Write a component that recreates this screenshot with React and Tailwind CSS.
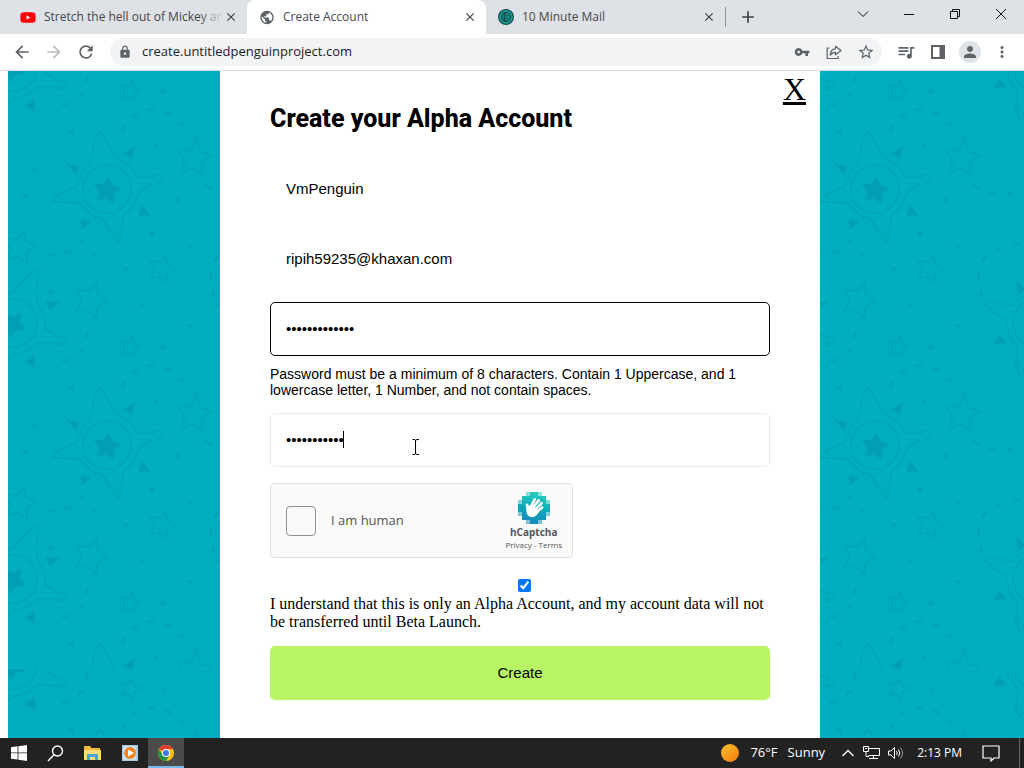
import React, { useState } from 'react';
import { FaYoutube } from 'react-icons/fa';
import {
  MdAdd,
  MdArrowBack,
  MdArrowForward,
  MdClose,
  MdLock,
  MdMoreVert,
  MdPerson,
  MdPublic,
  MdQueueMusic,
  MdRefresh,
  MdStarBorder,
  MdVpnKey,
} from 'react-icons/md';

const STAR = 'M0 -10 L3 -4 L10 -3 L5 2 L6 9 L0 6 L-6 9 L-5 2 L-10 -3 L-3 -4 Z';

// outlined stars in the 256px wallpaper tile: x, y, scale, rotation
const STARS = [
  [122, 20, 1.05, 15],
  [186, 87, 1.75, 8],
  [12, 176, 1.65, 12],
  [154, 198, 1.35, 18],
  [83, 229, 1.75, 20],
];

const DOTS = [
  [155, 20], [63, 61], [148, 74], [26, 99], [17, 125], [170, 129], [118, 198],
  [86, 184], [134, 234], [182, 255], [144, 163], [182, 176], [43, 221], [240, 38],
];

// copies that let the second sun wrap round the tile edges
const WRAP = [[0, -256], [0, 0], [256, -256], [256, 0]];

const Sun = () => (
  <g>
    <circle r="24" />
    <path d="M-17 -25 Q-15 -38 -10 -56 Q-5 -60 0 -46 Q5 -33 14 -28 Q24 -24 31 -12 Q42 -12 54 -14 Q58 -10 48 -5 Q33 0 30 7 Q26 20 16 27 Q15 42 12 54 Q6 47 2 40 L-4 30 Q-18 28 -27 14 Q-42 14 -54 12 Q-52 6 -40 2 L-30 -2 Q-28 -17 -17 -25 Z" />
    <g fill="#009fb6" stroke="none">
      <path d={STAR} transform="translate(0 1) scale(1.4) rotate(8)" />
      <path d="M-41 -26 L-28 -22 L-31 -14 Z" />
      <path d="M16 -36 L28 -42 L25 -30 Z" />
      <path d="M35 16 L43 26 L31 27 Z" />
      <path d="M-26 30 L-15 33 L-26 41 Z" />
    </g>
  </g>
);

const Tile = ({ id, y }) => (
  <pattern id={id} y={y} width="256" height="256" patternUnits="userSpaceOnUse">
    <rect width="256" height="256" fill="#00adc1" />
    <g fill="none" stroke="#00a3b8" strokeWidth="1.5" strokeLinejoin="round">
      <g transform="translate(99 118)"><Sun /></g>
      {WRAP.map(([dx, dy]) => (
        <g key={`${dx}${dy}`} transform={`translate(${dx + 5} ${dy + 252}) rotate(32)`}><Sun /></g>
      ))}
      {STARS.map(([x, sy, s, r]) => (
        <path key={x} d={STAR} strokeWidth={1.5 / s} transform={`translate(${x} ${sy}) rotate(${r}) scale(${s})`} />
      ))}
      <g strokeWidth="3" strokeDasharray="7 11">
        <path d="M114 61 Q120 42 142 38 Q162 38 178 58 Q188 66 197 74" />
        <path d="M197 114 Q225 132 256 114" />
        <path d="M206 226 Q196 190 219 179 Q236 172 256 174" />
        <path d="M39 184 Q66 184 76 168" />
        <path d="M79 4 Q80 32 44 36" />
      </g>
      <g fill="#00a3b8" stroke="none">
        {DOTS.map(([x, dy]) => <circle key={`${x}-${dy}`} cx={x} cy={dy} r="2.5" />)}
      </g>
    </g>
  </pattern>
);

const Wallpaper = () => (
  <svg className="absolute inset-0 h-full w-full" aria-hidden="true">
    <defs>
      <Tile id="tile-top" y="0" />
      <Tile id="tile-rest" y="598" />
    </defs>
    <rect width="100%" height="100%" fill="url(#tile-rest)" />
    <rect width="100%" height="598" fill="url(#tile-top)" />
  </svg>
);

const Tab = ({ icon, title, active }) => (
  <div
    className={
      active
        ? 'flex h-full w-[239px] items-center rounded-t-lg bg-white pr-2 pl-3'
        : 'flex h-full w-[239px] items-center pr-2 pl-3'
    }
  >
    <span className="mr-2 flex w-4 shrink-0 justify-center">{icon}</span>
    <span className="relative min-w-0 flex-1 overflow-hidden text-xs whitespace-nowrap text-[#45484d]">
      {title}
      {!active && <span className="absolute inset-y-0 right-0 w-6 bg-linear-to-r from-transparent to-[#dee1e6]" />}
    </span>
    <button type="button" aria-label={`Close ${title}`} className="flex h-4 w-4 items-center justify-center text-[#3c4043]">
      <MdClose size={14} />
    </button>
  </div>
);

const WindowButton = ({ label, children }) => (
  <button type="button" aria-label={label} className="flex h-7 w-[46px] items-center justify-center">
    <svg width="12" height="12" viewBox="0 0 12 12" fill="none" stroke="#111">{children}</svg>
  </button>
);

const ToolButton = ({ label, className = 'text-[#5f6368]', children }) => (
  <button type="button" aria-label={label} className={`flex h-7 w-8 items-center justify-center ${className}`}>
    {children}
  </button>
);

const MailIcon = () => (
  <svg width="16" height="16" viewBox="0 0 16 16">
    <circle cx="8" cy="8" r="8" fill="#174f50" />
    <circle cx="8" cy="8" r="6" fill="none" stroke="#17a398" strokeWidth="1.5" />
    <path d="M5 5v6M8 5h3v6H8zM8 8h3" fill="none" stroke="#17a398" />
  </svg>
);

const Browser = () => (
  <header className="font-['Open_Sans','Noto_Sans',sans-serif]">
    <div className="flex h-[34px] bg-[#dee1e6] pl-2">
      <Tab icon={<FaYoutube size={17} className="text-[#f00]" />} title="Stretch the hell out of Mickey an" />
      <Tab icon={<MdPublic size={17} className="text-[#5f6368]" />} title="Create Account" active />
      <Tab icon={<MailIcon />} title="10 Minute Mail" />
      <div className="flex items-center">
        <span className="h-5 w-px bg-[#8f9398]" />
        <button type="button" aria-label="New tab" className="flex w-11 justify-center text-[#3c4043]">
          <MdAdd size={20} />
        </button>
      </div>
      <div className="ml-auto flex">
        <WindowButton label="Search tabs"><path d="M1 3.5l5 5 5-5" /></WindowButton>
        <WindowButton label="Minimize"><path d="M1 6.5h10" /></WindowButton>
        <WindowButton label="Restore"><path d="M1.5 3.5h7v7h-7zM3.5 3.5v-2h7v7h-2" /></WindowButton>
        <WindowButton label="Close"><path d="M1 1l10 10M11 1L1 11" /></WindowButton>
      </div>
    </div>
    <nav className="flex h-[37px] items-center border-b border-[#d8dadc] bg-white px-1.5">
      <ToolButton label="Back"><MdArrowBack size={20} /></ToolButton>
      <ToolButton label="Forward" className="text-[#babcbe]"><MdArrowForward size={20} /></ToolButton>
      <ToolButton label="Reload"><MdRefresh size={20} /></ToolButton>
      <div className="mx-2 flex h-7 min-w-0 flex-1 items-center rounded-full bg-[#f1f3f4] pl-2">
        <MdLock size={14} className="text-[#5f6368]" />
        <input
          aria-label="Address"
          defaultValue="create.untitledpenguinproject.com"
          className="ml-2.5 min-w-0 flex-1 bg-transparent text-[13px] text-[#202124] outline-none"
        />
        <ToolButton label="Passwords"><MdVpnKey size={16} /></ToolButton>
        <ToolButton label="Share">
          <svg width="16" height="16" viewBox="0 0 16 16" fill="none" stroke="currentColor" strokeWidth="1.2">
            <path d="M3.5 4H1.2v10.5h11V12" />
            <path d="M9.5 2.2L15 6.5l-5.500 4.300V8.300C6.800 8.300 5.300 9.200 4.200 11.200 4.400 7.500 6.300 5 9.500 4.700z" strokeLinejoin="round" />
          </svg>
        </ToolButton>
        <ToolButton label="Bookmark"><MdStarBorder size={18} /></ToolButton>
      </div>
      <ToolButton label="Media"><MdQueueMusic size={20} /></ToolButton>
      <ToolButton label="Side panel">
        <svg width="14" height="14" viewBox="0 0 14 14" fill="currentColor">
          <path d="M0 0h14v14H0zM2 2v10h6.500V2z" fillRule="evenodd" />
        </svg>
      </ToolButton>
      <ToolButton label="Profile">
        <span className="flex h-[22px] w-[22px] items-center justify-center rounded-full bg-[#dfe2e7]">
          <MdPerson size={18} />
        </span>
      </ToolButton>
      <ToolButton label="Menu"><MdMoreVert size={18} /></ToolButton>
    </nav>
  </header>
);

const Field = ({ label, border = 'border-transparent', ...rest }) => (
  <input
    aria-label={label}
    className={`block h-[54px] w-full rounded-[5px] border bg-white px-[15px] pb-0.5 text-[15px] text-black outline-none ${border}`}
    {...rest}
  />
);

// pixel rows of the hCaptcha badge: [y, x start, width]
const BADGE = [
  [0, 8, 16], [4, 4, 24], [8, 0, 32], [12, 0, 32], [16, 0, 32], [20, 0, 32], [24, 4, 24], [28, 8, 16],
];

const CaptchaLogo = () => (
  <svg width="32" height="32" viewBox="0 0 32 32">
    <defs>
      <linearGradient id="badge" x1="0.600" y1="0" x2="0.400" y2="1">
        <stop offset="0" stopColor="#28cfc0" />
        <stop offset="0.500" stopColor="#12a9b8" />
        <stop offset="1" stopColor="#1787b8" />
      </linearGradient>
    </defs>
    <path d={BADGE.map(([y, x, w]) => `M${x} ${y}h${w}v4h-${w}z`).join('')} fill="url(#badge)" />
    <path d="M0 8h4v4h-4zM28 8h4v4h-4zM8 0h4v4h-4zM20 0h4v4h-4zM0 20h4v4h-4zM28 20h4v4h-4zM8 28h4v4h-4zM20 28h4v4h-4z" fill="#fff" opacity="0.450" />
    <g transform="rotate(14 16 17)">
      <g fill="none" stroke="#fff" strokeLinecap="round" strokeLinejoin="round">
        <path d="M12 16L14.500 7.500M14 17L18.500 7.500M17 18L22 9.500M19 20L23.500 13.500" strokeWidth="2.600" />
        <path d="M8 14.500C10 15 9.500 18 12 19" strokeWidth="2.400" />
      </g>
      <path d="M10.500 15L15 13.500L21.500 18C21 22.500 18 26 14 25.500C10 25 9 21 7.500 15L10 16Z" fill="#fff" />
    </g>
  </svg>
);

const Captcha = () => (
  <div className="mt-4 flex h-[75px] w-[303px] items-center rounded-[4px] border border-[#e0e0e0] bg-[#fafafa] pr-2.5 pl-[15px] font-['Open_Sans','Noto_Sans',sans-serif] text-[#555]">
    <input
      id="human"
      type="checkbox"
      className="h-[30px] w-[30px] appearance-none rounded-[4px] border border-[#919191] bg-[#fafafa]"
    />
    <label htmlFor="human" className="ml-[15px] text-[13px]">I am human</label>
    <div className="ml-auto flex flex-col items-center">
      <CaptchaLogo />
      <span className="text-[10px] leading-4 font-bold">hCaptcha</span>
      <span className="text-[8px] leading-[10px] whitespace-nowrap">
        <a href="#privacy">Privacy</a> - <a href="#terms">Terms</a>
      </span>
    </div>
  </div>
);

const SignUp = () => {
  const [form, setForm] = useState({
    username: 'VmPenguin',
    email: 'ripih59235@khaxan.com',
    password: 'Penguin123456',
    confirm: 'Penguin1234',
    understood: true,
  });

  const handleChange = (e) => {
    const { name, value, type, checked } = e.target;
    setForm((prev) => ({ ...prev, [name]: type === 'checkbox' ? checked : value }));
  };

  return (
    <div className="relative w-full max-w-[600px] bg-white pb-[38px]">
      <div className="flex justify-end pr-3.5">
        <a href="#close" aria-label="Close" className="font-['Liberation_Serif',serif] text-[32px] leading-9 text-black underline">
          X
        </a>
      </div>
      <form onSubmit={(e) => e.preventDefault()} className="px-[50px] font-['Liberation_Sans',sans-serif]">
        <h1 className="mb-[31px] font-['Roboto',sans-serif] text-[25px] leading-6 font-extrabold">Create your Alpha Account</h1>
        <div className="space-y-4">
          <Field label="Username" name="username" value={form.username} onChange={handleChange} />
          <Field label="Email" name="email" type="email" value={form.email} onChange={handleChange} />
          <Field label="Password" name="password" type="password" border="border-black" value={form.password} onChange={handleChange} />
        </div>
        <p className="mt-2.5 mb-[15px] text-[14px] leading-4">
          Password must be a minimum of 8 characters. Contain 1 Uppercase, and 1 lowercase letter, 1 Number, and not contain spaces.
        </p>
        <div className="relative">
          <Field label="Confirm password" name="confirm" type="password" border="border-[#ececec]" value={form.confirm} onChange={handleChange} />
          <span className="absolute top-[18px] left-[73px] h-[17px] w-px bg-black" />
          <svg className="absolute top-[26px] left-[142px]" width="8" height="16" viewBox="0 0 8 16" fill="none" stroke="#000">
            <path d="M0.500 0.500h2.500l0.500 1h0.500l0.500-1h2.500M3.500 1v14M0.500 15.500h2.500l0.500-1h0.500l0.500 1h2.500" />
          </svg>
        </div>
        <Captcha />
        <div className="mt-[21px] flex justify-center pl-2">
          <input
            id="understood"
            name="understood"
            type="checkbox"
            checked={form.understood}
            onChange={handleChange}
            className="h-[13px] w-[13px] accent-[#0075ff]"
          />
        </div>
        <label htmlFor="understood" className="mt-[3px] mb-[15px] block font-['Liberation_Serif',serif] text-base leading-[18px]">
          I understand that this is only an Alpha Account, and my account data will not be transferred until Beta Launch.
        </label>
        <button type="submit" className="h-[54px] w-full rounded-[5px] bg-[#b8f564] text-[15px] text-black">
          Create
        </button>
      </form>
    </div>
  );
};

const ChromeIcon = () => (
  <svg width="16" height="16" viewBox="0 0 16 16">
    <circle cx="8" cy="8" r="8" fill="#fbc116" />
    <path d="M8 8L1.100 4A8 8 0 0 1 14.900 4H8z" fill="#e33b2e" />
    <path d="M1.100 4A8 8 0 0 0 8 16l3.500-6L8 8 4.500 10z" fill="#229342" />
    <circle cx="8" cy="8" r="4" fill="#fff" />
    <circle cx="8" cy="8" r="3" fill="#3b78e7" />
  </svg>
);

const TaskButton = ({ label, active, children }) => (
  <button
    type="button"
    aria-label={label}
    className={
      active
        ? 'flex h-full w-9 items-center justify-center border-b-2 border-[#76b9ed] bg-[#4b4b4b] pt-0.5'
        : 'flex h-full w-[37px] items-center justify-center'
    }
  >
    {children}
  </button>
);

const Taskbar = () => (
  <footer className="flex h-[30px] items-center bg-[#222] font-['Open_Sans','Noto_Sans',sans-serif] text-white">
    <TaskButton label="Start">
      <svg width="16" height="16" viewBox="0 0 16 16" fill="#fff">
        <path d="M0 2.300L6.600 1.300V7.500H0zM7.400 1.200L16 0V7.500H7.400zM0 8.300H6.600V14.600L0 13.700zM7.400 8.300H16V16L7.400 14.800z" />
      </svg>
    </TaskButton>
    <TaskButton label="Search">
      <svg width="17" height="17" viewBox="0 0 17 17" fill="none" stroke="#fff" strokeWidth="1.400">
        <circle cx="10.500" cy="6" r="5" />
        <path d="M7 9.800L1 16" />
      </svg>
    </TaskButton>
    <TaskButton label="File Explorer">
      <svg width="17" height="14" viewBox="0 0 17 14">
        <path d="M0 0h6l1.500 2H16v12H0z" fill="#f0b93a" />
        <path d="M0 4h17v10H0z" fill="#fcdc77" />
        <path d="M3 14V8h11v6h-3v-3H6v3z" fill="#4aa3d9" />
      </svg>
    </TaskButton>
    <TaskButton label="Media Player">
      <svg width="16" height="16" viewBox="0 0 16 16">
        <rect width="16" height="16" fill="#a9cde8" />
        <rect x="1.500" y="1.500" width="12" height="13" fill="#dcebf5" />
        <circle cx="8" cy="8" r="6" fill="#ee8421" />
        <path d="M6 4.500v7L12 8z" fill="#fff" />
      </svg>
    </TaskButton>
    <TaskButton label="Chrome" active><ChromeIcon /></TaskButton>

    <div className="ml-auto flex h-full items-center">
      <button type="button" className="flex items-center text-[13px]">
        <span className="mr-[11px] h-[18px] w-[18px] rounded-full bg-linear-to-br from-[#fdc12c] to-[#f0780c]" />
        <span className="mr-2.5">76°F</span>
        <span>Sunny</span>
      </button>
      <button type="button" aria-label="Hidden icons" className="ml-4">
        <svg width="14" height="8" viewBox="0 0 14 8" fill="none" stroke="#fff" strokeWidth="1.300"><path d="M1.500 7L7 1.500 12.500 7" /></svg>
      </button>
      <button type="button" aria-label="Network" className="ml-2">
        <svg width="17" height="16" viewBox="0 0 17 16" fill="none" stroke="#fff">
          <path d="M5.500 3.500h11v7h-11M10.500 10.500v3M6 13.500h9M0.500 1.500h5v5h-5zM3 6.500v5h3M2 3.500h2" />
        </svg>
      </button>
      <button type="button" aria-label="Volume" className="ml-2">
        <svg width="17" height="14" viewBox="0 0 17 14" fill="none" stroke="#fff">
          <path d="M0.500 5h2.500l3.500-3.500v11L3 9H0.500zM8.500 5Q10 7 8.500 9M10.500 3.500Q13 7 10.500 10.500" />
          <path d="M12.500 1.500Q16.500 7 12.500 12.500" stroke="#999" />
        </svg>
      </button>
      <time className="ml-3 text-xs whitespace-nowrap">2:13 PM</time>
      <button type="button" aria-label="Notifications" className="ml-5">
        <svg width="18" height="17" viewBox="0 0 18 17" fill="none" stroke="#fff" strokeWidth="1.200">
          <path d="M1 1h16v12h-5l-3 3v-3H1z" />
        </svg>
      </button>
      <span className="mr-1 ml-[19px] h-full w-px bg-[#666]" />
    </div>
  </footer>
);

const App = () => (
  <div className="flex min-h-screen flex-col bg-white">
    <Browser />
    <main className="relative ml-2 flex flex-1 justify-center pl-2">
      <Wallpaper />
      <SignUp />
    </main>
    <Taskbar />
  </div>
);

export default App;
